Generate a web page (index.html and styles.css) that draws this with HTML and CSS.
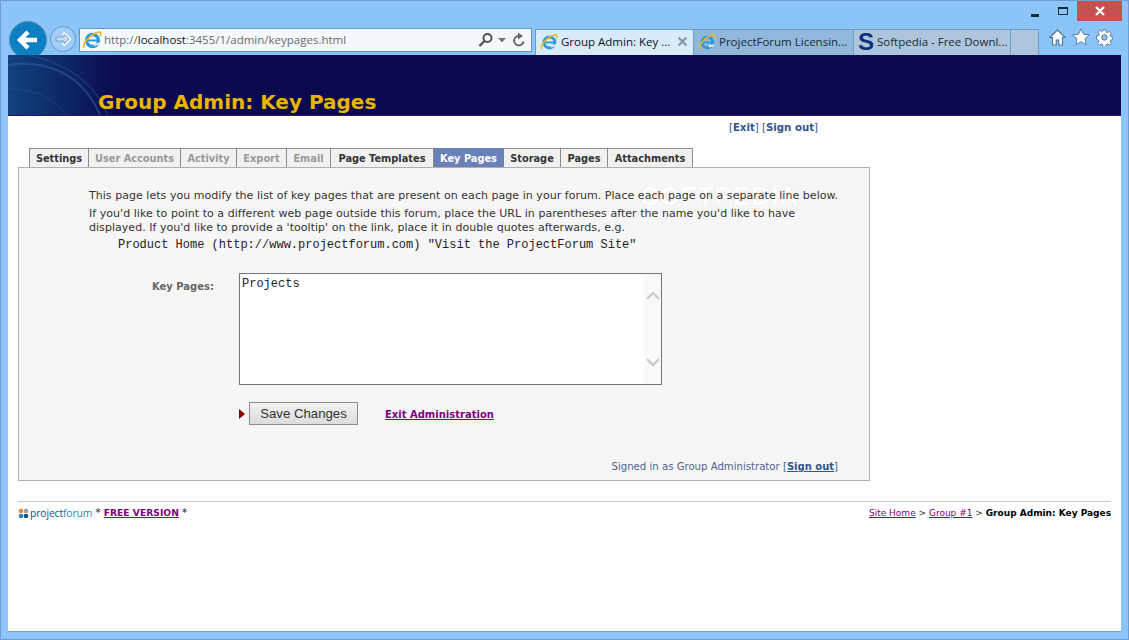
FILE: index.html
```html
<!DOCTYPE html>
<html lang="en">
<head>
<meta charset="utf-8">
<title>Group Admin: Key Pages</title>
<link rel="stylesheet" href="styles.css">
</head>
<body>
<div class="window">
  <div class="titlebar">
    <div class="win-btn min"><span class="min-bar"></span></div>
    <div class="win-btn max"><span class="max-box"></span></div>
    <div class="win-btn close">
      <svg width="12" height="12" viewBox="0 0 12 12"><path d="M2 2l8 8M10 2l-8 8" stroke="#fff" stroke-width="2.2"/></svg>
    </div>
  </div>
  <div class="toolbar">
    <div class="back">
      <svg width="24" height="24" viewBox="0 0 24 24"><path d="M21 12H5M12 4l-8 8 8 8" fill="none" stroke="#fff" stroke-width="4.4"/></svg>
    </div>
    <div class="forward">
      <svg width="18" height="18" viewBox="0 0 18 18"><path d="M2 9h12M9 3l6 6-6 6" fill="none" stroke="#fff" stroke-width="3.4"/><path d="M2 7h8V4l5 5-5 5v-3H2z" fill="#c4dcf3" stroke="#7ea3c6" stroke-width="1"/></svg>
    </div>
    <div class="address">
      <svg class="ie" width="20" height="20" viewBox="0 0 20 20"><use href="#ie-logo"/></svg>
      <span class="url"><span>http://</span><b>localhost</b><span>:3455/1/admin/keypages.html</span></span>
      <svg class="addr-ico" width="18" height="16" viewBox="0 0 18 16"><circle cx="10.500" cy="6" r="4" fill="none" stroke="#555" stroke-width="2"/><path d="M7.500 9l-5 5" stroke="#555" stroke-width="2.400"/></svg>
      <svg class="addr-arrow" width="8" height="5" viewBox="0 0 8 5"><path d="M0 0h8L4 4.500z" fill="#777"/></svg>
      <svg class="addr-ico" width="14" height="16" viewBox="0 0 14 16"><path d="M11.500 9.500A4.700 4.700 0 1 1 7 4" fill="none" stroke="#666" stroke-width="2"/><path d="M6 0.500l5 3.500-5 3.500z" fill="#666"/></svg>
    </div>
    <div class="tab active">
      <svg class="tab-ie" width="18" height="18" viewBox="0 0 20 20"><use href="#ie-logo"/></svg>
      <span class="tab-label">Group Admin: Key ...</span>
      <svg class="tab-x" width="11" height="11" viewBox="0 0 11 11"><path d="M1.500 1.500l8 8M9.500 1.500l-8 8" stroke="#8a969f" stroke-width="2.200"/></svg>
    </div>
    <div class="tab second">
      <svg class="tab-ie" width="18" height="18" viewBox="0 0 20 20"><use href="#ie-logo"/></svg>
      <span class="tab-label">ProjectForum Licensin...</span>
    </div>
    <div class="tab third">
      <span class="s-logo">S</span>
      <span class="tab-label">Softpedia - Free Downl...</span>
    </div>
    <div class="tab newtab"></div>
    <div class="tools">
      <svg width="17" height="17" viewBox="0 0 17 17"><path d="M8.500 1L.8 8.500h2.700V16h3.700v-5h2.600v5h3.700V8.500h2.700z" fill="#fff" stroke="#4f7396" stroke-width="1.100"/></svg>
      <svg width="18" height="18" viewBox="0 0 18 18"><path d="M9 .8l2.500 5.400 5.800.6-4.300 3.900 1.200 6L9 13.700l-5.200 3 1.200-6L.7 6.800l5.800-.6z" fill="#fff" stroke="#4f7396" stroke-width=".9"/></svg>
      <svg width="17" height="17" viewBox="0 0 17 17"><path d="M7 .7h3l.4 2.300 1.500.6 1.900-1.300 2 2.100-1.300 1.900.6 1.500 2.200.4v3l-2.200.4-.6 1.500 1.300 1.900-2 2-1.900-1.300-1.500.6-.4 2.200H7l-.4-2.200-1.500-.6-1.900 1.300-2-2 1.300-1.900-.6-1.500L0 10V7l2.300-.4.6-1.500L1.600 3.200l2-2.100 1.900 1.300 1.100-.6z" transform="translate(.5 .2) scale(.94)" fill="#fff" stroke="#4f7396" stroke-width="1"/><circle cx="8.500" cy="8.500" r="2.700" fill="#8ac4f8" stroke="#4f7396" stroke-width="1"/></svg>
    </div>
  </div>

  <div class="page">
    <header class="banner">
      <svg class="swirl" width="112" height="60" viewBox="0 0 112 60"><path d="M0 10C40 4 75 20 92 60" fill="none" stroke="#3a6aa8" stroke-width="2" opacity=".45"/><path d="M20 0C60 8 88 30 100 60" fill="none" stroke="#3a6aa8" stroke-width="1.500" opacity=".3"/><path d="M0 34C28 34 48 44 58 60" fill="none" stroke="#3a6aa8" stroke-width="1" opacity=".25"/></svg>
      <h1 class="banner-title">Group Admin: Key Pages</h1>
    </header>
    <main class="content">
      <div class="toplinks">[<a href="#">Exit</a>] [<a href="#">Sign out</a>]</div>
      <nav class="tabs">
        <a class="ptab" href="#">Settings</a>
        <a class="ptab off" href="#">User Accounts</a>
        <a class="ptab off" href="#">Activity</a>
        <a class="ptab off" href="#">Export</a>
        <a class="ptab off" href="#">Email</a>
        <a class="ptab" href="#">Page Templates</a>
        <a class="ptab on" href="#">Key Pages</a>
        <a class="ptab" href="#">Storage</a>
        <a class="ptab" href="#">Pages</a>
        <a class="ptab" href="#">Attachments</a>
      </nav>
      <section class="panel">
        <span class="watermark">SOFTPEDIA</span>
        <p class="intro single">This page lets you modify the list of key pages that are present on each page in your forum. Place each page on a separate line below.</p>
        <p class="intro gap">If you'd like to point to a different web page outside this forum, place the URL in parentheses after the name you'd like to have displayed. If you'd like to provide a 'tooltip' on the link, place it in double quotes afterwards, e.g.</p>
        <pre class="example">Product Home (http://www.projectforum.com) "Visit the ProjectForum Site"</pre>
        <div class="field">
          <label class="field-label" for="keypages">Key Pages:</label>
          <div class="ta-box">
            <textarea id="keypages" class="ta">Projects</textarea>
            <div class="ta-scroll">
              <svg width="14" height="9" viewBox="0 0 14 9"><path d="M1 8l6-6 6 6" fill="none" stroke="#c9cccc" stroke-width="2.400"/></svg>
              <svg width="14" height="9" viewBox="0 0 14 9"><path d="M1 1l6 6 6-6" fill="none" stroke="#c9cccc" stroke-width="2.400"/></svg>
            </div>
          </div>
        </div>
        <div class="actions">
          <span class="marker"></span>
          <button class="save" type="button">Save Changes</button>
          <a class="exit-admin" href="#">Exit Administration</a>
        </div>
        <div class="signed">Signed in as Group Administrator [<a href="#">Sign out</a>]</div>
      </section>
      <hr class="rule">
      <footer class="foot">
        <div class="foot-left">
          <svg width="11" height="11" viewBox="0 0 11 11"><circle cx="3" cy="3" r="2.300" fill="#e08a3c"/><circle cx="8" cy="3" r="2.300" fill="#9aa3ab"/><circle cx="3" cy="8" r="2.300" fill="#2f84b4"/><circle cx="8" cy="8" r="2.300" fill="#12507e"/></svg>
          <span class="pf-logo"><span class="pf-a">project</span><span class="pf-b">forum</span></span>
          <span class="star">*</span> <a class="free" href="#">FREE VERSION</a> <span class="star">*</span>
        </div>
        <div class="crumbs"><a href="#">Site Home</a> &gt; <a href="#">Group #1</a> &gt; <b>Group Admin: Key Pages</b></div>
      </footer>
    </main>
  </div>
</div>
<svg class="defs" width="0" height="0">
  <defs>
    <g id="ie-logo">
      <circle cx="10.500" cy="10.500" r="6" fill="none" stroke="#2f9bd9" stroke-width="3.400"/>
      <path d="M5 10.500h11" stroke="#2f9bd9" stroke-width="2"/>
      <path d="M12 15l6-1.500" stroke="#dff0fb" stroke-width="2.200"/>
      <path d="M2 18C0 14 8 4 17 2c2.500-.5 2 2.500 1 4" fill="none" stroke="#f0b41e" stroke-width="1.600"/>
    </g>
  </defs>
</svg>
</body>
</html>
```
FILE: styles.css
```css
* { box-sizing: border-box; }
html, body { margin: 0; height: 100%; }
body { font-family: "DejaVu Sans", Verdana, sans-serif; font-size: 10.500px; color: #333; overflow: hidden; }
.defs { display: block; height: 0; }

.window { width: 1129px; height: 640px; display: flex; flex-direction: column; background: #8ac4f8; border: 1px solid #6c9fd0; padding: 0 7px 7px; }

.titlebar { height: 20px; flex: none; display: flex; justify-content: flex-end; margin-right: -1px; }
.win-btn { display: flex; align-items: center; justify-content: center; }
.min { width: 26px; }
.min-bar { width: 8px; height: 3px; background: #1c2b3a; margin-top: 8px; }
.max { width: 30px; }
.max-box { width: 10px; height: 8px; border: 1px solid #1c2b3a; border-top-width: 2px; }
.close { width: 45px; background: #c75050; margin-left: -1px; }

.toolbar { height: 34px; flex: none; display: flex; align-items: flex-end; overflow: hidden; }
.back { width: 38px; height: 38px; flex: none; border-radius: 50%; background: #0b80c4; border: 1px solid #5d8cb3; margin: 0 0 -4px 1px; display: flex; align-items: center; justify-content: center; align-self: flex-start; }
.forward { width: 26px; height: 26px; flex: none; border-radius: 50%; border: 1px solid #6f9ac0; margin: 0 3px 3px 3px; display: flex; align-items: center; justify-content: center; background: #9fcff8; }
.address { width: 453px; height: 24px; flex: none; background: #f4f9fe; border: 1px solid #5d97c6; margin-bottom: 3px; margin-right: 3px; display: flex; align-items: center; padding: 0 5px 0 2px; }
.ie { flex: none; }
.url { flex: 1; padding: 0 0 2px 2px; font: 11.500px "Open Sans", sans-serif; color: #6a6a6a; white-space: nowrap; }
.url b { font-weight: 400; color: #111; }
.addr-ico { flex: none; }
.addr-arrow { flex: none; margin: 0 6px 0 3px; }

.tab { width: 160px; height: 26px; flex: none; display: flex; align-items: center; gap: 3px; padding: 0 4px 2px; border: 1px solid #6a9cc8; border-bottom: 0; border-left-width: 0; font: 11.500px "Open Sans", sans-serif; color: #1e2a35; white-space: nowrap; }
.tab.active { width: 159px; background: #d8ebfb; border-left-width: 1px; color: #111; }
.tab.second { background: #8fb8da; }
.tab.third { width: 157px; background: #adc6db; }
.tab.newtab { width: 28px; background: #adc6db; }
.tab-ie { flex: none; }
.tab-label { flex: 1; }
.tab-x { flex: none; margin-right: 1px; }
.s-logo { font: 700 24px/1 "Liberation Sans", sans-serif; color: #0c2f7e; width: 19px; text-align: center; }
.tools { flex: 1; display: flex; gap: 6px; padding: 0 0 9px 10px; align-items: center; }

.page { flex: 1; background: #fff; border-bottom: 1px solid #6c9fd0; display: flex; flex-direction: column; }
.banner { height: 61px; flex: none; position: relative; background: linear-gradient(90deg, #12427f 0, #0d2a68 50px, #0b0a4e 110px); border-bottom: 1px solid #3a0a6e; display: flex; align-items: flex-end; padding: 0 0 0 90px; }
.swirl { position: absolute; left: 0; top: 0; }
.banner-title { position: relative; margin: 0; font: 700 20px/26px "DejaVu Sans", sans-serif; color: #e8b400; }

.content { flex: 1; padding: 0 10px; }
.toplinks { width: 800px; height: 32px; padding-top: 5px; line-height: 13px; text-align: right; color: #33538f; font-size: 10.200px; }
.toplinks a { font-weight: 700; color: #33538f; text-decoration: none; }

.tabs { display: flex; padding-left: 11px; height: 19px; }
.ptab { border: 1px solid #8c8c8c; border-bottom: 0; border-left-width: 0; background: #f1f1f1; color: #333; font-weight: 700; font-size: 9.800px; line-height: 20px; text-decoration: none; text-align: center; }
.ptab:first-child { border-left-width: 1px; width: 60px; }
.ptab:nth-child(2) { width: 92px; }
.ptab:nth-child(3) { width: 56px; }
.ptab:nth-child(4) { width: 50px; }
.ptab:nth-child(5) { width: 44px; }
.ptab:nth-child(6) { width: 103px; }
.ptab:nth-child(7) { width: 70px; }
.ptab:nth-child(8) { width: 57px; }
.ptab:nth-child(9) { width: 47px; }
.ptab:nth-child(10) { width: 85px; }
.ptab.off { color: #999; }
.ptab.on { background: #6a80b8; color: #fff; border-color: #6a80b8; }

.panel { width: 852px; position: relative; background: #f6f6f6; border: 1px solid #b0b0b0; padding: 21px 31px 6px 70px; }
.intro { position: relative; margin: 0; max-width: 752px; font-size: 11px; line-height: 14px; letter-spacing: .04px; }
.intro.single { white-space: nowrap; }
.intro.gap { margin-top: 4px; }
.example { margin: 3px 0 0 29px; font: 12px/14px "Liberation Mono", monospace; color: #222; }
.watermark { position: absolute; top: 13px; right: 70px; font: 700 26px/30px "Liberation Sans", sans-serif; color: #fff; letter-spacing: 1px; text-shadow: 0 0 1px #d8d8d8; }

.field { display: flex; margin-top: 21px; gap: 25px; }
.field-label { width: 125px; padding-top: 7px; font-size: 10px; line-height: 14px; text-align: right; font-weight: 700; color: #666; }
.ta-box { width: 423px; height: 112px; display: flex; background: #fff; border: 1px solid #767676; }
.ta { flex: 1; border: 0; outline: 0; padding: 3px 2px; margin: 0; resize: none; overflow: hidden; font: 12px/14px "Liberation Mono", monospace; color: #222; background: #fff; }
.ta-scroll { width: 17px; background: #f9f9f9; display: flex; flex-direction: column; justify-content: space-between; align-items: center; padding: 17px 0 17px; }

.actions { display: flex; align-items: center; margin: 17px 0 0 150px; }
.marker { width: 0; height: 0; border-left: 6px solid #8b0000; border-top: 5px solid transparent; border-bottom: 5px solid transparent; margin-right: 4px; }
.save { width: 109px; height: 23px; padding: 0; border: 1px solid #8a8a8a; background: linear-gradient(#f2f2f2, #dcdcdc); font: 13.200px "Liberation Sans", sans-serif; color: #333; }
.exit-admin { margin: 2px 0 0 27px; font-weight: 700; font-size: 10px; color: #800080; }

.signed { margin-top: 35px; font-size: 10.150px; line-height: 14px; text-align: right; color: #4c6390; }
.signed a { font-weight: 700; font-size: 10px; color: #33538f; }

.rule { margin: 20px 0 0; height: 1px; border: 0; background: #c8c8e0; }
.foot { display: flex; justify-content: space-between; padding-top: 4px; line-height: 14px; }
.foot-left { display: flex; align-items: center; gap: 3px; }
.foot-left svg { flex: none; margin-right: -2px; }
.pf-logo { font: 10.300px "Open Sans", sans-serif; letter-spacing: -.1px; }
.pf-a { color: #12507e; }
.pf-b { color: #2f84b4; }
.star { font-size: 11px; color: #222; }
.free { font-weight: 700; font-size: 9.200px; color: #800080; }
.crumbs { font-size: 9px; color: #333; }
.crumbs a { color: #800080; }
.crumbs b { color: #000; }
```
